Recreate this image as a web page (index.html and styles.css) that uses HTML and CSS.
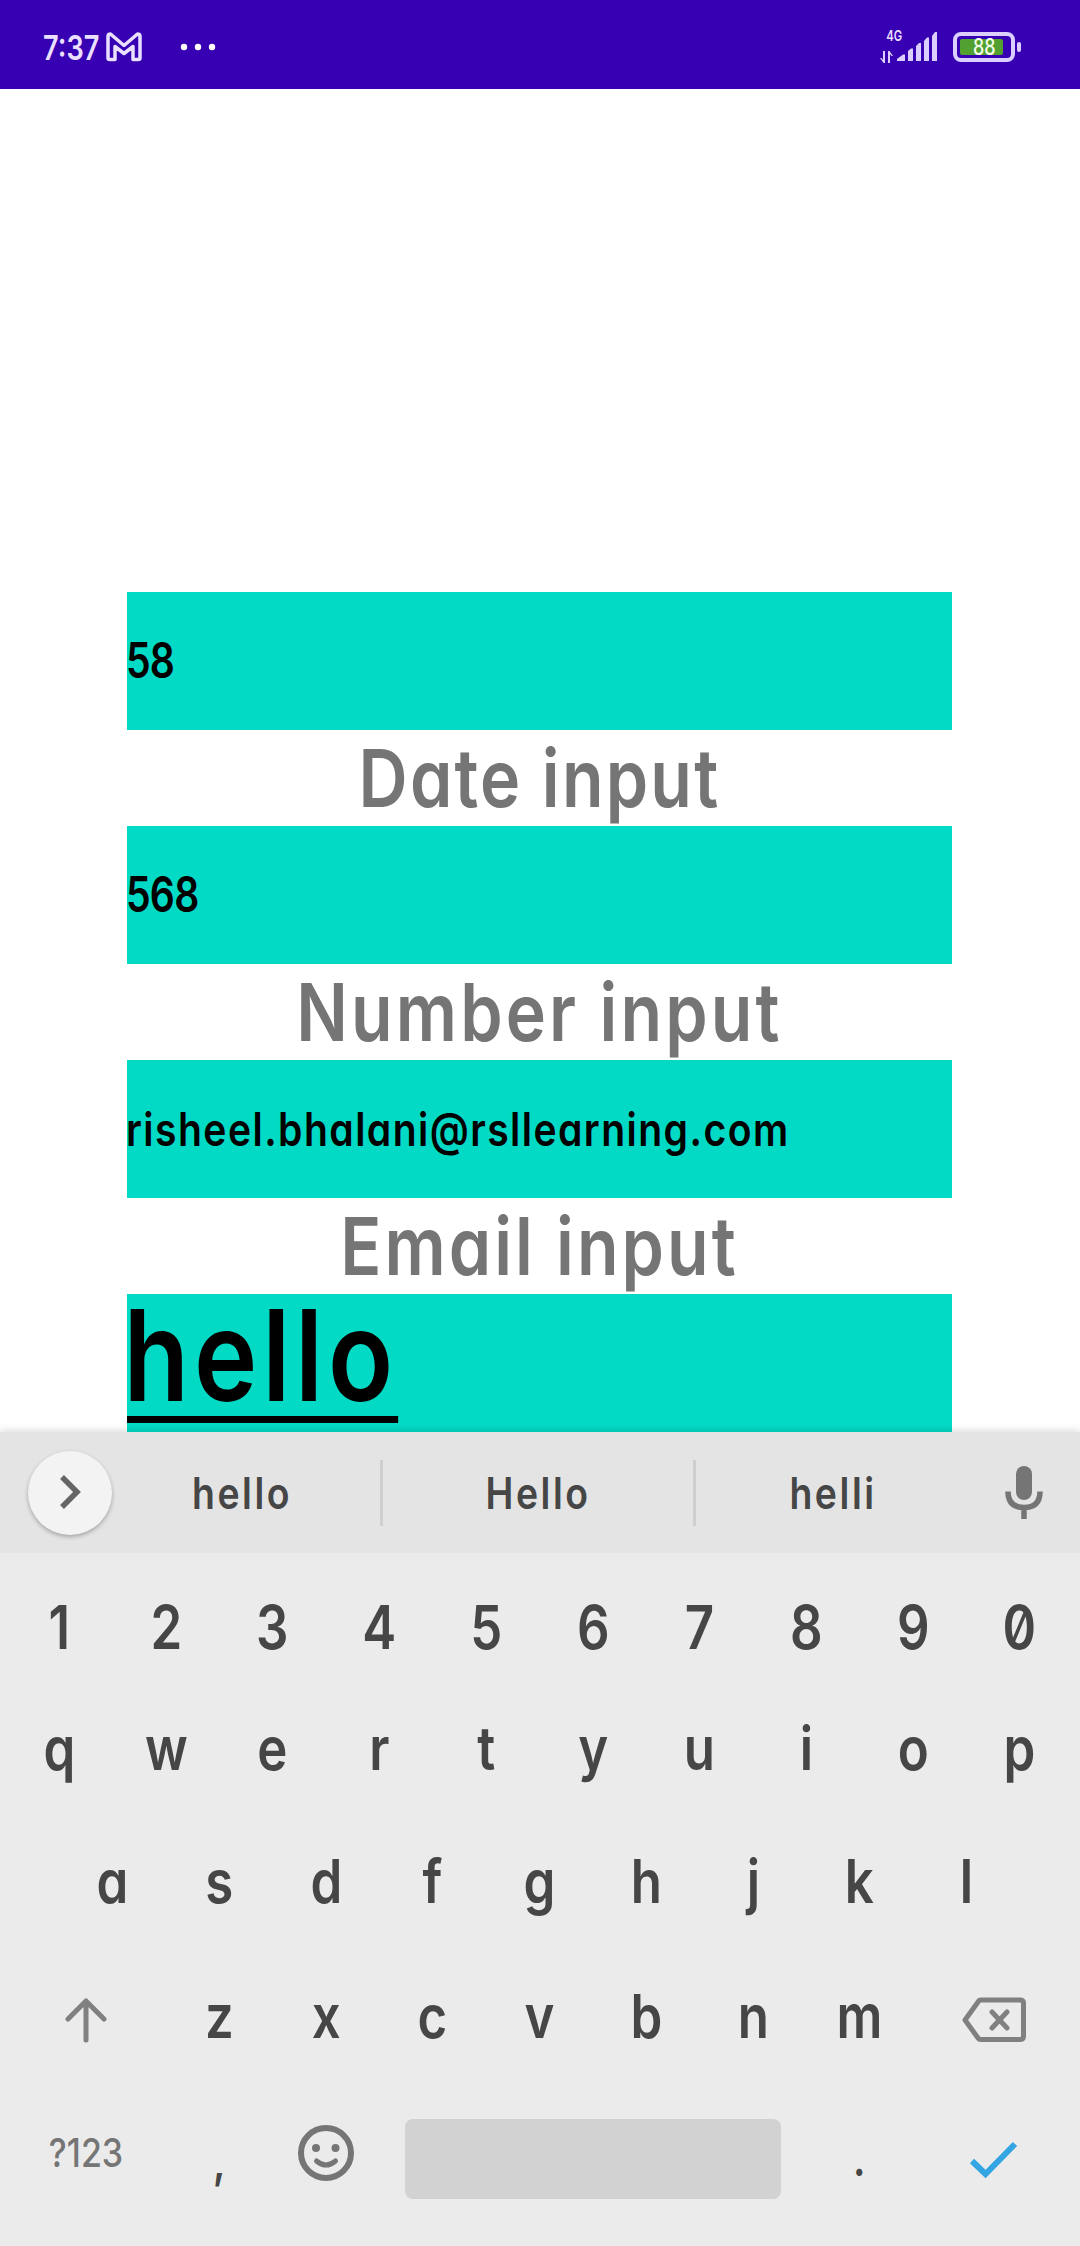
FILE: index.html
```
<!DOCTYPE html>
<html lang="en">
<head>
<meta charset="utf-8">
<title>Input types</title>
<link rel="stylesheet" href="styles.css">
</head>
<body>
<header class="status">
  <div class="status-left">
    <span class="clock">7:37</span>
    <svg class="gmail" width="36" height="30" viewBox="0 0 36 30"><path d="M2 4.500Q2 2 4.500 2L18 13.500L31.500 2Q34 2 34 4.500V26Q34 27.500 32 27.500H27V14.500L18 21.500L9 14.500V27.500H4Q2 27.500 2 26Z"/></svg>
    <svg class="dots" width="36" height="8" viewBox="0 0 36 8"><circle cx="4" cy="4" r="3.200"/><circle cx="18" cy="4" r="3.200"/><circle cx="32" cy="4" r="3.200"/></svg>
  </div>
  <div class="status-right">
    <div class="network">
      <span class="net-type">4G</span>
      <svg class="net-arrows" width="14" height="13" viewBox="0 0 14 13"><path d="M0 7H1.500L3 9V0H5V12H3.500ZM8 12V0H9.500L13 5H11.500L10 3V12Z"/></svg>
    </div>
    <svg class="signal" width="41" height="30" viewBox="0 0 41 30"><path d="M0 29V27L6 22.500H8V29ZM11 29V19L14 16.500H16V29ZM19 29V14L22 11H24V29ZM27 29V9L30 5.500H32V29ZM35 29V4L38 0H40V29Z"/></svg>
    <div class="battery"><div class="battery-case"><div class="battery-level"><span class="percent">88</span></div></div><i class="battery-nub"></i></div>
  </div>
</header>
<main class="form">
  <div class="field digits"><span class="value">58</span></div>
  <div class="label date">Date input</div>
  <div class="field digits"><span class="value">568</span></div>
  <div class="label number">Number input</div>
  <div class="field email"><span class="value">risheel.bhalani@rsllearning.com</span></div>
  <div class="label email-label">Email input</div>
  <div class="field big"><span class="value composing">hello</span></div>
</main>
<section class="keyboard">
  <div class="strip">
    <div class="expand"><svg width="84" height="84" viewBox="0 0 84 84"><path d="M34 26L49 41L34 56"/></svg></div>
    <span class="word first">hello</span><i class="divider"></i>
    <span class="word second">Hello</span><i class="divider"></i>
    <span class="word third">helli</span>
    <svg class="mic" width="40" height="54" viewBox="0 0 40 54"><rect x="12" y="0" width="16" height="34" rx="8"/><path d="M4 25.500Q4 41.500 20 41.500T36 25.500M20 41V53"/></svg>
  </div>
  <div class="row r1"><b>1</b><b>2</b><b>3</b><b>4</b><b>5</b><b>6</b><b>7</b><b>8</b><b>9</b><b>0</b></div>
  <div class="row r2"><b>q</b><b>w</b><b>e</b><b>r</b><b>t</b><b>y</b><b>u</b><b>i</b><b>o</b><b>p</b></div>
  <div class="row r3"><b>a</b><b>s</b><b>d</b><b>f</b><b>g</b><b>h</b><b>j</b><b>k</b><b>l</b></div>
  <div class="row r4">
    <span class="wide"><svg width="44" height="48" viewBox="0 0 44 48"><path d="M22 44V5M4 23L22 5L40 23"/></svg></span>
    <b>z</b><b>x</b><b>c</b><b>v</b><b>b</b><b>n</b><b>m</b>
    <span class="wide"><svg width="66" height="46" viewBox="0 0 66 46"><path d="M20 3H59Q62.500 3 62.500 6V39Q62.500 42.500 59 42.500H20Q18 42.500 17 41L4 23L17 5Q18 3 20 3ZM31 15L46 31M46 15L31 31"/></svg></span>
  </div>
  <div class="row r5">
    <span class="wide symbols">?123</span>
    <b class="comma">,</b>
    <span class="emoji"><svg width="58" height="58" viewBox="0 0 58 58"><circle class="ring" cx="29" cy="29" r="25"/><circle cx="19" cy="24" r="4"/><circle cx="38.500" cy="24" r="4"/><path class="ring smile" d="M19.500 37Q29 45 38.500 37"/></svg></span>
    <span class="space"></span>
    <b class="period">.</b>
    <span class="wide"><svg class="check" width="50" height="38" viewBox="0 0 50 38"><path d="M3 20L16.500 33L46 3"/></svg></span>
  </div>
</section>
</body>
</html>
```

FILE: styles.css
```
* { box-sizing: border-box; }
body {
  margin: 0;
  height: 2246px;
  display: flex;
  flex-direction: column;
  background: #fff;
  font-family: Inter, "Open Sans", sans-serif;
  font-feature-settings: "cv11", "zero";
  overflow: hidden;
}
svg { display: block; flex: none; fill: none; }
.status {
  height: 89px;
  flex: none;
  display: flex;
  justify-content: space-between;
  padding: 5px 59px 0 43px;
  background: #3700b3;
  color: #eadfff;
}
.status-left, .status-right { display: flex; align-items: center; }
.clock { width: 63px; font-size: 34px; font-weight: 600; transform: scaleX(.8); transform-origin: left; }
.gmail { stroke: #eadfff; stroke-width: 3.500; stroke-linejoin: round; }
.dots { margin-left: 38px; fill: #fff; }
.network { width: 26px; height: 34px; margin-right: -9px; display: flex; flex-direction: column; justify-content: space-between; }
.net-type { align-self: flex-end; margin-right: 4px; font-size: 15px; line-height: 12px; font-weight: 600; transform: scaleX(.75); transform-origin: right; }
.net-arrows { fill: #dccfff; }
.signal { fill: #dccfff; margin-right: 15px; }
.battery { display: flex; align-items: center; gap: 2px; }
.battery-case {
  width: 62px;
  height: 30px;
  padding: 3px;
  border: 4px solid #dccfff;
  border-radius: 8px;
}
.battery-level {
  width: 43px;
  height: 16px;
  padding-left: 13px;
  border-radius: 2px;
  background: #52a030;
  color: #f4ffec;
  font-size: 23px;
  font-weight: 500;
  line-height: 16px;
}
.percent { display: block; transform: scaleX(.78); transform-origin: left; }
.battery-nub { width: 4px; height: 10px; border-radius: 2px; background: #dccfff; }

.form { height: 1343px; flex: none; padding: 503px 128px 0 127px; }
.field {
  height: 138px;
  background: #03dac5;
  color: #000;
  line-height: 138px;
  font-weight: 600;
  white-space: nowrap;
}
.value { display: inline-block; transform: scaleX(.85); transform-origin: left; }
.digits .value { transform: scaleX(.8); margin-left: -1px; }
.digits { font-size: 49px; letter-spacing: -1px; }
.email { font-size: 46px; letter-spacing: 1.700px; }
.email .value { margin-left: -1px; }
.label { height: 96px; line-height: 96px; font-size: 80px; font-weight: 600; text-align: center; color: #757575; white-space: nowrap; transform: scaleX(.85); }
.date { letter-spacing: 2.600px; }
.number { letter-spacing: 3.700px; }
.email-label { letter-spacing: 3.600px; }
.big { font-size: 126px; line-height: 122px; font-weight: 600; letter-spacing: 5.700px; }
.composing { height: 129px; border-bottom: 7px solid #000; text-indent: -4px; }

.keyboard { position: relative; flex: 1; background: #ebebeb; color: #464646; box-shadow: 0 -1px 8px rgba(0,0,0,.16); }
.strip { height: 121px; margin-bottom: 6px; display: flex; align-items: center; background: #e4e4e4; padding-left: 28px; }
.expand { width: 84px; height: 84px; margin-right: -8px; border-radius: 50%; background: #f3f3f3; box-shadow: 0 2px 4px rgba(0,0,0,.28); }
.expand path { stroke: #656565; stroke-width: 5.500; }
.word { text-align: center; font-size: 44px; font-weight: 600; letter-spacing: 3px; transform: scaleX(.85); }
.first { width: 276px; }
.second { width: 310px; }
.third { width: 274px; }
.divider { width: 3px; height: 66px; background: #cfcfcf; }
.mic { margin-left: 34px; stroke: #757575; stroke-width: 5.500; }
.mic rect { fill: #757575; stroke: none; }
.row { display: flex; justify-content: center; align-items: center; padding: 0 6px 0 5px; }
.row b { width: 106.700px; text-align: center; font-size: 60px; font-weight: 600; transform: scaleX(.85); }
.r1 { height: 135px; }
.r2 { height: 107px; }
.r3 { height: 159px; }
.r4 { height: 111px; }
.r5 { height: 176px; }
.wide { width: 160px; display: flex; justify-content: center; }
.wide:last-child { padding: 2px 0 0 2px; }
.r4 .wide { padding-top: 9px; }
.r4 svg { stroke: #808080; stroke-width: 5; stroke-linecap: round; stroke-linejoin: round; }
.symbols { padding-bottom: 13px; font-size: 40px; font-weight: 500; color: #757575; transform: scaleX(.85); }
.emoji { width: 106.700px; display: flex; justify-content: center; padding: 0 2px 12px 0; }
.emoji svg { fill: #757575; }
.emoji .ring { fill: none; stroke: #757575; stroke-width: 6; }
.emoji .smile { stroke-width: 5; stroke-linecap: round; }
.space { width: 376px; height: 80px; margin: 0 25px; border-radius: 8px; background: #d2d2d2; }
.row .comma, .row .period { font-size: 46px; }
.row .comma { padding-top: 3px; }
.check path { stroke: #33a5e2; stroke-width: 6; }
```
